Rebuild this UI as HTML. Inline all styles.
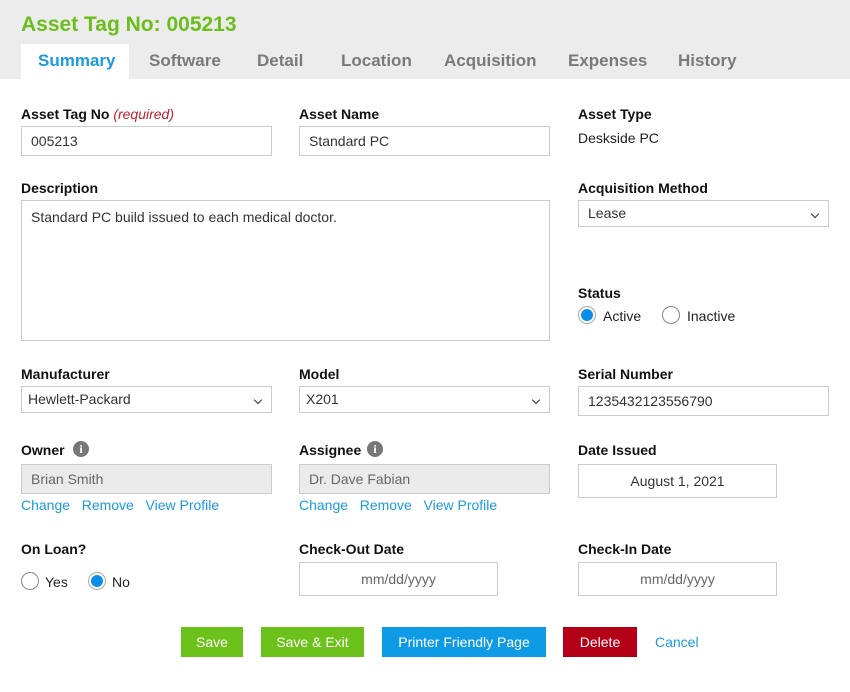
<!DOCTYPE html>
<html><head><style>
*{box-sizing:border-box;margin:0;padding:0}
body{width:850px;height:692px;background:#fff;font-family:"Liberation Sans",sans-serif;font-size:14px;color:#222;position:relative;overflow:hidden}
.a{position:absolute}
.hdr{left:0;top:0;width:850px;height:79px;background:#ececec}
.title{left:21px;top:13px;font-size:21px;font-weight:bold;color:#6cbe1c}
.tab{top:51px;font-size:17px;font-weight:bold;color:#7a7a7a}
.lbl{font-weight:bold;font-size:14px;color:#111}
.in{border:1px solid #ccc;background:#fff;height:30px;padding:0 9px;line-height:28px;font-size:14px;color:#333}
.sel::after{content:"";position:absolute;right:10px;top:10px;width:5px;height:5px;border-right:1.5px solid #333;border-bottom:1.5px solid #333;transform:rotate(45deg)}
.gray{background:#ebebeb;color:#666}
.lnk{color:#1a9be0;font-size:14px}
.rad{width:18px;height:18px;border:1px solid #888;border-radius:50%;background:#fff}
.rad.on{border:1px solid #aaa}
.rad.on::after{content:"";position:absolute;left:2px;top:2px;width:12px;height:12px;border-radius:50%;background:#0c8ee8}
.btn{top:627px;height:30px;line-height:30px;color:#fff;text-align:center;font-size:14px}
.info{width:16px;height:16px;border-radius:50%;background:#777;color:#fff;font-size:12px;font-weight:bold;text-align:center;line-height:16px;font-family:"Liberation Serif",serif}
</style></head><body>
<div class="a hdr"></div>
<div class="a title">Asset Tag No: 005213</div>
<div class="a" style="left:21px;top:44px;width:108px;height:36px;background:#fff"></div>
<div class="a tab" style="left:38px;color:#1a9be0">Summary</div>
<div class="a tab" style="left:149px">Software</div>
<div class="a tab" style="left:257px">Detail</div>
<div class="a tab" style="left:341px">Location</div>
<div class="a tab" style="left:444px">Acquisition</div>
<div class="a tab" style="left:568px">Expenses</div>
<div class="a tab" style="left:678px">History</div>

<div class="a lbl" style="left:21px;top:106px">Asset Tag No <i style="color:#c0202e;font-weight:normal">(required)</i></div>
<div class="a in" style="left:21px;top:126px;width:251px">005213</div>
<div class="a lbl" style="left:299px;top:106px">Asset Name</div>
<div class="a in" style="left:299px;top:126px;width:251px">Standard PC</div>
<div class="a lbl" style="left:578px;top:106px">Asset Type</div>
<div class="a" style="left:578px;top:130px">Deskside PC</div>

<div class="a lbl" style="left:21px;top:180px">Description</div>
<div class="a in" style="left:21px;top:200px;width:529px;height:141px;line-height:1.3;padding-top:7px">Standard PC build issued to each medical doctor.</div>
<div class="a lbl" style="left:578px;top:180px">Acquisition Method</div>
<div class="a in sel" style="left:578px;top:200px;width:251px;height:27px;line-height:25px">Lease</div>

<div class="a lbl" style="left:578px;top:285px">Status</div>
<div class="a rad on" style="left:578px;top:306px"></div>
<div class="a" style="left:603px;top:308px">Active</div>
<div class="a rad" style="left:662px;top:306px"></div>
<div class="a" style="left:687px;top:308px">Inactive</div>

<div class="a lbl" style="left:21px;top:366px">Manufacturer</div>
<div class="a in sel" style="left:21px;top:386px;width:251px;height:27px;line-height:25px;padding-left:6px">Hewlett-Packard</div>
<div class="a lbl" style="left:299px;top:366px">Model</div>
<div class="a in sel" style="left:299px;top:386px;width:251px;height:27px;line-height:25px;padding-left:6px">X201</div>
<div class="a lbl" style="left:578px;top:366px">Serial Number</div>
<div class="a in" style="left:578px;top:386px;width:251px">1235432123556790</div>

<div class="a lbl" style="left:21px;top:442px">Owner</div>
<div class="a info" style="left:73px;top:441px">i</div>
<div class="a in gray" style="left:21px;top:464px;width:251px">Brian Smith</div>
<div class="a lnk" style="left:21px;top:497px">Change&nbsp;&nbsp;&nbsp;Remove&nbsp;&nbsp;&nbsp;View Profile</div>
<div class="a lbl" style="left:299px;top:442px">Assignee</div>
<div class="a info" style="left:367px;top:441px">i</div>
<div class="a in gray" style="left:299px;top:464px;width:251px">Dr. Dave Fabian</div>
<div class="a lnk" style="left:299px;top:497px">Change&nbsp;&nbsp;&nbsp;Remove&nbsp;&nbsp;&nbsp;View Profile</div>
<div class="a lbl" style="left:578px;top:442px">Date Issued</div>
<div class="a in" style="left:578px;top:464px;width:199px;height:34px;line-height:32px;text-align:center">August 1, 2021</div>

<div class="a lbl" style="left:21px;top:541px">On Loan?</div>
<div class="a rad" style="left:21px;top:572px"></div>
<div class="a" style="left:45px;top:574px">Yes</div>
<div class="a rad on" style="left:88px;top:572px"></div>
<div class="a" style="left:112px;top:574px">No</div>
<div class="a lbl" style="left:299px;top:541px">Check-Out Date</div>
<div class="a in" style="left:299px;top:562px;width:199px;height:34px;line-height:32px;text-align:center;color:#666">mm/dd/yyyy</div>
<div class="a lbl" style="left:578px;top:541px">Check-In Date</div>
<div class="a in" style="left:578px;top:562px;width:199px;height:34px;line-height:32px;text-align:center;color:#666">mm/dd/yyyy</div>

<div class="a btn" style="left:181px;width:62px;background:#6cc21a">Save</div>
<div class="a btn" style="left:261px;width:103px;background:#6cc21a">Save &amp; Exit</div>
<div class="a btn" style="left:382px;width:164px;background:#0f9ae6">Printer Friendly Page</div>
<div class="a btn" style="left:563px;width:74px;background:#b30016">Delete</div>
<div class="a lnk" style="left:655px;top:634px">Cancel</div>
</body></html>
